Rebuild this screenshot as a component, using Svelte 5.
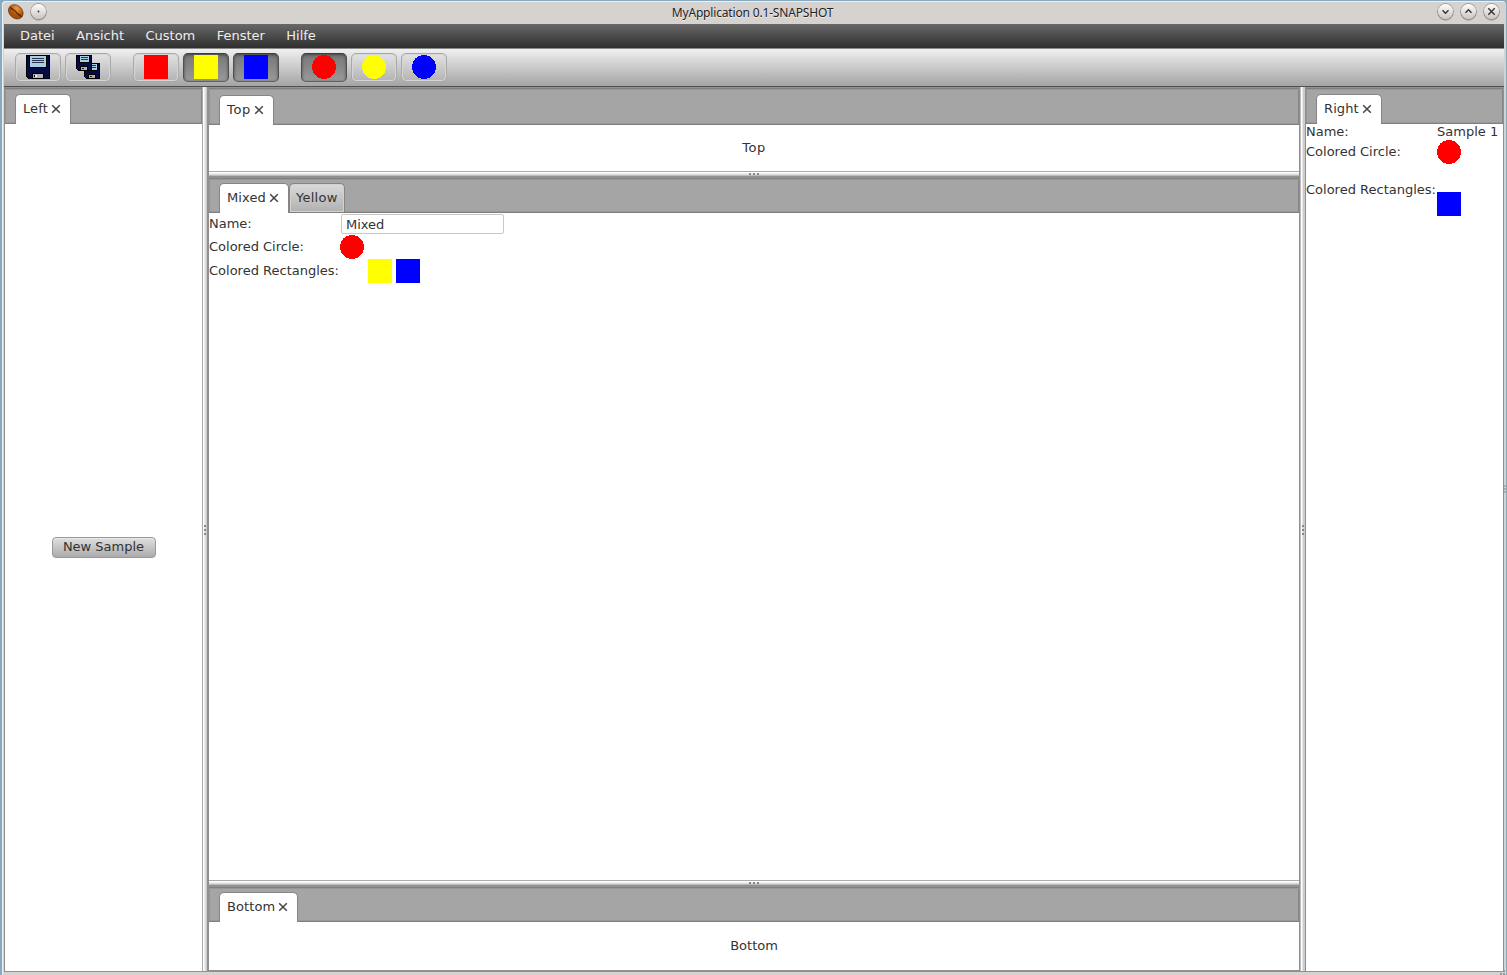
<script>
  const menus = ['Datei', 'Ansicht', 'Custom', 'Fenster', 'Hilfe'];
  const shapes = [
    [
      { kind: 'rect', color: '#ff0000', on: false },
      { kind: 'rect', color: '#ffff00', on: true },
      { kind: 'rect', color: '#0000ff', on: true }
    ],
    [
      { kind: 'circle', color: '#ff0000', on: true },
      { kind: 'circle', color: '#ffff00', on: false },
      { kind: 'circle', color: '#0000ff', on: false }
    ]
  ];
  let name = $state('Mixed');
</script>

{#snippet shape(kind, color)}
  <svg class="shape" width="24" height="24" viewBox="0 0 24 24" shape-rendering="crispEdges">
    {#if kind === 'circle'}
      <circle cx="12" cy="12" r="12" fill={color} />
    {:else}
      <rect width="24" height="24" fill={color} />
    {/if}
  </svg>
{/snippet}

{#snippet tab(label)}
  <div class="tab active">
    <span>{label}</span>
    <svg width="10" height="10" viewBox="0 0 10 10"><path d="M1.2 1.2l7.6 7.6M8.8 1.2L1.2 8.8" stroke="#444" stroke-width="1.5" /></svg>
  </div>
{/snippet}

{#snippet floppy()}
  <path d="M0 0H24V24H2L0 22Z" fill="#000" />
  <path d="M1 1H23V23H3L1 21Z" fill="#050b45" />
  <path d="M3 0H21V13H3Z" fill="#000" />
  <path d="M4 1H20V12H4Z" fill="#a9cfe3" />
  <path d="M6 3H18V4H6ZM6 5H18V6H6ZM6 7H18V8H6Z" fill="#27364d" />
  <path d="M6 18H18V24H6Z" fill="#000" />
  <path d="M7 19H17V23H7Z" fill="#b4b4b4" />
  <path d="M8 20H11V22H8Z" fill="#000" />
  <path d="M9 20H11V22H9Z" fill="#eee" />
{/snippet}

{#snippet smallFloppy()}
  <path d="M0 0H16V16H2L0 14Z" fill="#000" />
  <path d="M1 1H15V15H2L1 14Z" fill="#050b45" />
  <path d="M3 0H14V8H3Z" fill="#000" />
  <path d="M4 1H13V7H4Z" fill="#a9cfe3" />
  <path d="M5 2H12V3H5ZM5 4H12V5H5Z" fill="#27364d" />
  <path d="M4 11H12V16H4Z" fill="#000" />
  <path d="M5 12H11V15H5Z" fill="#b4b4b4" />
  <path d="M6 13H8V14H6Z" fill="#111" />
{/snippet}

<div class="desktop">
  <div class="window">
    <header class="title">
      <svg class="bean" width="18" height="18" viewBox="0 0 18 18">
        <defs><radialGradient id="bean" cx="40%" cy="25%"><stop offset="0" stop-color="#f09b3c" /><stop offset="1" stop-color="#a84f08" /></radialGradient></defs>
        <ellipse cx="8.7" cy="9" rx="8" ry="6.4" transform="rotate(42 9 9)" fill="url(#bean)" stroke="#6d3409" stroke-width=".7" />
        <path d="M3.2 4.5C6 7.2 7.5 6.5 9 9s3.6 2.7 5.4 4.8" fill="none" stroke="#4a2105" stroke-width="1.1" />
      </svg>
      <span class="round"><svg width="15" height="15"><circle cx="7.5" cy="7.5" r=".9" fill="#333" /></svg></span>
      <h1>MyApplication 0.1-SNAPSHOT</h1>
      <div class="controls">
        <span class="round"><svg width="15" height="15"><path d="M4.5 6.2l3 3 3-3" /></svg></span>
        <span class="round"><svg width="15" height="15"><path d="M4.5 8.8l3-3 3 3" /></svg></span>
        <span class="round"><svg width="15" height="15"><path d="M4.3 4.3l6.4 6.4M10.7 4.3l-6.4 6.4" /></svg></span>
      </div>
    </header>
    <nav>
      {#each menus as m}<span>{m}</span>{/each}
    </nav>
    <div class="toolbar">
      <div class="group">
        <button class="tool"><svg width="24" height="24" viewBox="0 0 24 24" shape-rendering="crispEdges">{@render floppy()}</svg></button>
        <button class="tool"><svg width="24" height="24" viewBox="0 0 24 24" shape-rendering="crispEdges"><g transform="translate(8 8)">{@render smallFloppy()}</g>{@render smallFloppy()}</svg></button>
      </div>
      {#each shapes as group}
        <div class="group">
          {#each group as s}
            <button class="tool" class:on={s.on}>{@render shape(s.kind, s.color)}</button>
          {/each}
        </div>
      {/each}
    </div>
    <main>
      <section class="pane left">
        <div class="tabs">{@render tab('Left')}</div>
        <div class="body center"><button class="push">New Sample</button></div>
      </section>
      <div class="vsplit west"><i></i><i></i><i></i></div>
      <div class="column">
        <section class="pane top">
          <div class="tabs">{@render tab('Top')}</div>
          <div class="body center">Top</div>
        </section>
        <div class="hsplit"><i></i><i></i><i></i></div>
        <section class="pane editor">
          <div class="tabs">{@render tab('Mixed')}<div class="tab idle"><span>Yellow</span></div></div>
          <div class="body">
            <div class="row name"><label for="name">Name:</label><input id="name" bind:value={name} /></div>
            <div class="row circle"><span class="label">Colored Circle:</span>{@render shape('circle', '#ff0000')}</div>
            <div class="row rects"><span class="label">Colored Rectangles:</span>{@render shape('rect', '#ffff00')}{@render shape('rect', '#0000ff')}</div>
          </div>
        </section>
        <div class="hsplit"><i></i><i></i><i></i></div>
        <section class="pane bottom">
          <div class="tabs">{@render tab('Bottom')}</div>
          <div class="body center">Bottom</div>
        </section>
      </div>
      <div class="vsplit east"><i></i><i></i><i></i></div>
      <section class="pane right">
        <div class="tabs">{@render tab('Right')}</div>
        <div class="body details">
          <span>Name:</span><span>Sample 1</span>
          <span>Colored Circle:</span>{@render shape('circle', '#ff0000')}
          <span>Colored Rectangles:</span><div class="drop">{@render shape('rect', '#0000ff')}</div>
        </div>
      </section>
    </main>
    <div class="edge"><i></i><i></i><i></i></div>
    <svg class="grip" width="7" height="6" shape-rendering="crispEdges"><path d="M1 4h2v2H1zM4 4h2v2H4zM4 1h2v2H4z" fill="#999" /></svg>
  </div>
</div>

<style>
  :global(body) { margin: 0; overflow: hidden; }
  * { box-sizing: border-box; }
  svg { display: block; flex: none; }
  .desktop {
    width: 1507px; height: 975px; padding: 1px 1px 0 2px;
    background: #84abc1; overflow: hidden;
    font: 13px/16px 'DejaVu Sans', sans-serif; color: #333;
  }
  .window {
    position: relative; height: 974px; padding: 0 2px;
    display: flex; flex-direction: column;
    background: #d6d2d0; border-radius: 4px 4px 0 0;
    box-shadow: inset 1px 1px 0 #f1efee;
  }
  .title { height: 23px; flex: none; display: flex; align-items: center; padding: 0 5px 2px 3px; }
  .bean { margin-right: 6px; }
  h1 {
    flex: 1; margin: 0; text-align: center; font: 12px/16px 'Noto Sans', sans-serif;
    letter-spacing: -.17px; color: #222; text-shadow: 0 1px #eee; padding: 2px 0 0 21px;
  }
  .controls { display: flex; gap: 8px; }
  .round {
    width: 15px; height: 15px; border-radius: 50%;
    background: linear-gradient(#fdfdfd, #c9c6c4);
    box-shadow: 0 0 0 .8px #8f8c8a, 0 1.5px 1px #999;
  }
  .round path { fill: none; stroke: #333; stroke-width: 1.4; }
  nav {
    height: 24px; flex: none; display: flex; gap: 21.4px; padding: 4px 16px 0;
    color: #ededed; background: linear-gradient(#686868, #2f2f2f);
  }
  .toolbar {
    height: 39px; flex: none; display: flex; gap: 22px; padding: 4px 11px 0;
    border-top: 1px solid #898989; border-bottom: 1px solid #505050;
    background: linear-gradient(#f0f0f0, #a4a4a4);
  }
  .group { display: flex; gap: 4px; }
  .tool {
    width: 46px; height: 29px; padding: 0 10px 2px; border: 1px solid #aaa; border-radius: 5px;
    background: linear-gradient(#e3e3e3, #b3b3b3);
    box-shadow: inset 0 0 0 1px #d5d5d5;
  }
  .tool.on {
    border-color: #3d3d3d #505050 #606060; background: linear-gradient(#777, #999);
    box-shadow: inset 0 1px 3px #444;
  }
  main { height: 885px; flex: none; display: flex; border-left: 1px solid #909090; border-right: 1px solid #909090; border-bottom: 1px solid #909090; background: #fff; }
  .pane { display: flex; flex-direction: column; background: #fff; min-width: 0; }
  .left { width: 197px; }
  .column { width: 1090px; display: flex; flex-direction: column; border-bottom: 1px solid #909090; }
  .right { flex: 1; }
  .top { height: 84px; }
  .editor { flex: 1; }
  .bottom { height: 84px; }
  .tabs {
    height: 37px; flex: none; display: flex; align-items: flex-end; padding: 0 10px;
    background: #a5a5a5; border-top: 1px solid #929292; border-bottom: 1px solid #808080;
    box-shadow: inset 0 1px #808080, inset 0 2px #989898, inset -1px 0 #858585, inset 1px 0 #949494, inset 0 -1px #999;
  }
  .top .tabs { height: 38px; }
  .editor .tabs, .bottom .tabs { height: 36px; }
  .tab {
    height: 30px; margin-bottom: -1px; padding: 6px 8px 0 7px; display: flex; gap: 3px;
    border: 1px solid #858585; border-bottom: 0; border-radius: 5px 5px 0 0;
  }
  .tab.active { background: #fff; padding-right: 9px; }
  .tab.active span { letter-spacing: .1px; }
  .top .tab span { letter-spacing: .7px; }
  .tab svg { margin-top: 3px; }
  .tab.idle { height: 29px; margin-bottom: 0; padding: 6px 6px 0; background: linear-gradient(#dadada, #b0b0b0); box-shadow: inset 0 0 0 1px #d2d2d2; }
  .tab.idle span { letter-spacing: .3px; }
  .body { flex: 1; }
  .center { display: flex; align-items: center; justify-content: center; }
  .top .center { letter-spacing: .6px; }
  .push {
    width: 104px; height: 21px; padding: 0 0 1px; font: inherit; line-height: 18px; color: #333;
    border: 1px solid #999; border-radius: 4px; background: linear-gradient(#e0e0e0, #ababab);
    box-shadow: inset 0 1px #e8e8e8;
  }
  .vsplit { width: 7px; flex: none; display: flex; flex-direction: column; align-items: center; justify-content: center; gap: 2px; padding-top: 1px; }
  .west { padding-right: 1px; background: linear-gradient(90deg, #aaa 1px, #fff 1px 2px, #eee 2px 3px, #ddd 3px 4px, #ccc 4px 5px, #909090 5px); }
  .east { background: linear-gradient(90deg, #909090 1px, #bbb 1px 2px, #fff 2px 3px, #e8e8e8 3px 4px, #ccc 4px 6px, #909090 6px); }
  .hsplit { height: 6px; flex: none; display: flex; align-items: center; justify-content: center; gap: 2px; background: linear-gradient(#aaa 1px, #fff 1px 2px, #eee 2px 3px, #ddd 3px 4px, #bbb 4px 5px, #909090 5px); }
  i { width: 2px; height: 2px; background: #888; }
  .row { display: flex; align-items: center; }
  .row label, .row .label { width: 131px; white-space: nowrap; }
  .name { height: 22px; }
  input {
    width: 163px; height: 20px; margin-left: 1px; padding: 0 4px; font: inherit; color: #333;
    border: 1px solid #c8c8c8; border-radius: 2px; outline: 0; background: #fff;
  }
  .circle { height: 24px; }
  .rects { height: 24px; gap: 4px; }
  .rects .label { width: 155px; }
  .details { display: grid; grid-template-columns: 131px 1fr; grid-template-rows: 16px 38px 40px; white-space: nowrap; align-content: start; }
  .details > span:nth-of-type(3) { padding-top: 4px; }
  .details > span:nth-of-type(4) { padding-top: 0; }
  .details > span { height: 20px; }
  .details > span:nth-of-type(5), .details > span:last-of-type { padding-top: 4px; }
  .drop { padding-top: 14px; }
  .edge { position: absolute; right: 0; top: 484px; width: 2px; display: flex; flex-direction: column; gap: 1px; }
  .edge i { background: #aaa; }
  .grip { position: absolute; right: 0; bottom: 0; }
</style>
